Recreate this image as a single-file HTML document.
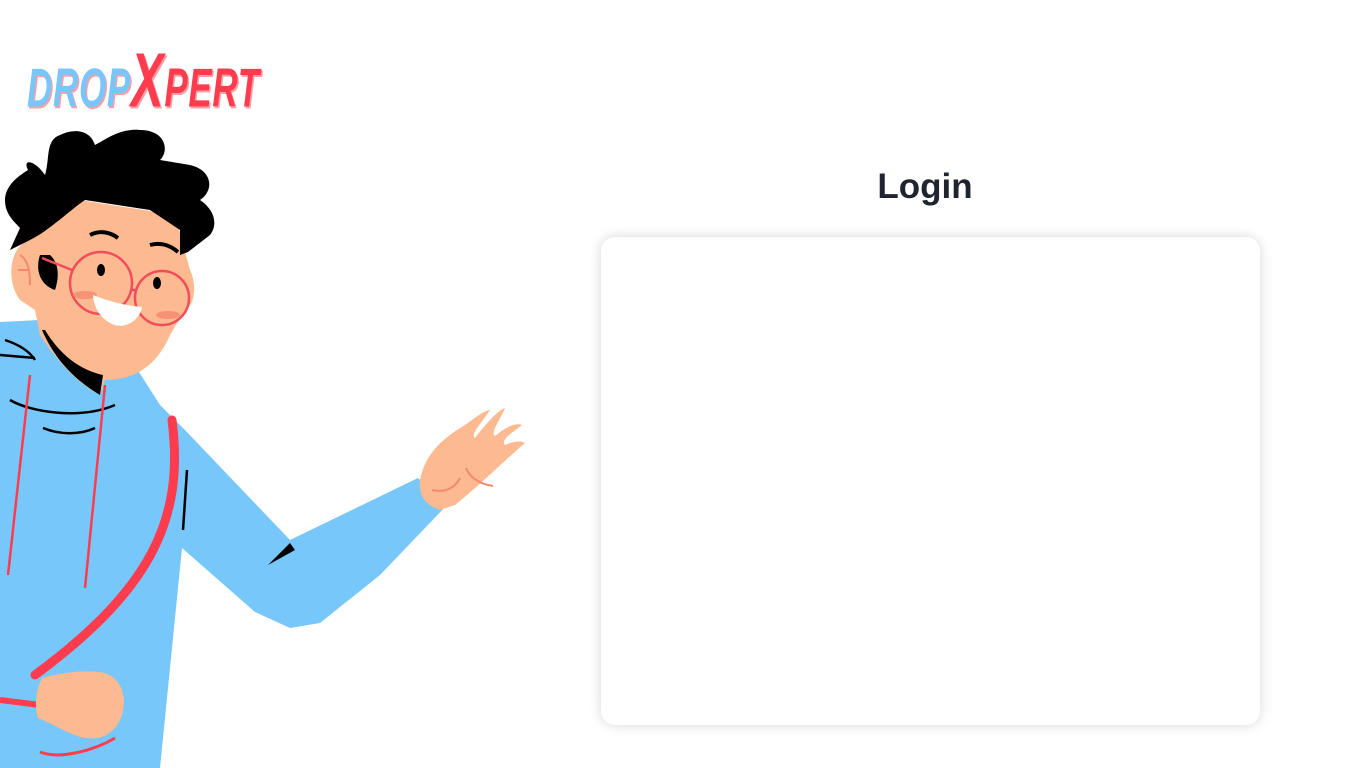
<!DOCTYPE html>
<html><head><meta charset="utf-8"><style>
html,body{margin:0;padding:0;background:#fff;width:1366px;height:768px;overflow:hidden;position:relative;font-family:"Liberation Sans",sans-serif}
.logo{position:absolute;left:27px;top:40px;white-space:nowrap;font-weight:bold;font-style:italic;letter-spacing:1px}
.logo span{display:inline-block;transform:scale(.7,1.1);transform-origin:left}
h1{position:absolute;left:0;width:1850px;top:167px;margin:0;text-align:center;font-size:35px;font-weight:bold;color:#1f2430}
.card{position:absolute;left:601px;top:237px;width:659px;height:488px;border-radius:14px;background:#fff;box-shadow:0 0 12px rgba(0,0,0,.16)}
svg{position:absolute;left:0;top:0}
</style></head><body>
<svg width="540" height="768" viewBox="0 0 540 768">
<path d="M0 322 L40 320 L48 345 L125 350 L160 405 L185 430 L290 540 L418 478 L447 505 L380 575 L320 623 L290 628 L255 612 L182 548 L160 768 L0 768 Z" fill="#78c7fb"/>
<path d="M420 480 C425 455 440 440 465 425 C475 418 485 410 490 410 C480 425 470 435 475 438 C485 425 498 410 505 408 C500 420 490 433 495 436 C505 428 515 422 522 425 C512 433 500 440 505 445 C512 442 520 440 525 443 C505 460 480 485 455 505 L440 510 C425 505 418 495 420 480 Z" fill="#fdb98f"/>
<path d="M432 490 C445 493 455 488 460 478 M466 468 C470 478 480 484 493 486" stroke="#f4896f" stroke-width="2" fill="none"/>
<path d="M40 335 C60 365 80 385 100 395 L105 380 C130 380 155 370 170 335 L185 310 C195 305 197 285 190 270 L175 215 L80 200 L30 240 C10 245 5 280 20 300 L35 310 Z" fill="#fdb98f"/>
<path d="M42 330 C55 360 75 380 100 395 L103 375 C80 370 60 355 45 330 Z" fill="#000"/>
<path d="M10 250 L30 240 C50 230 70 210 85 200 L150 210 L180 230 L180 255 L188 252 L210 235 C218 225 215 210 200 200 C215 190 212 170 190 165 L160 160 C170 150 165 130 140 130 C120 128 105 140 95 145 C90 130 75 128 60 135 C45 140 50 160 45 175 C35 160 22 158 28 170 C20 175 5 185 5 200 C5 215 15 222 20 228 L10 250 Z" fill="#000"/>
<path d="M40 255 C35 270 40 285 55 290 C60 275 58 262 50 255 Z" fill="#000"/>
<path d="M20 255 C28 260 30 270 30 285 M18 270 L28 270" stroke="#f4896f" stroke-width="2" fill="none"/>
<circle cx="101" cy="283" r="31" fill="none" stroke="#f04e5c" stroke-width="2.5"/>
<circle cx="162" cy="298" r="27" fill="none" stroke="#f04e5c" stroke-width="2.5"/>
<path d="M42 258 L72 270 M130 290 L135 290" stroke="#f04e5c" stroke-width="2.5" fill="none"/>
<ellipse cx="85" cy="295" rx="12" ry="4" fill="#f4896f" opacity=".8"/>
<ellipse cx="168" cy="315" rx="12" ry="4" fill="#f4896f" opacity=".8"/>
<ellipse cx="101" cy="270" rx="4" ry="6"/><ellipse cx="157" cy="283" rx="4" ry="6"/>
<path d="M90 235 C100 230 110 232 118 238 M150 245 C160 242 170 245 178 252" stroke="#000" stroke-width="4" fill="none"/>
<path d="M93 295 C110 302 128 306 142 307 C140 320 125 330 112 324 C100 318 94 308 93 295 Z" fill="#fff"/>
<path d="M10 400 C30 412 80 420 115 405 M43 428 C60 435 80 435 95 428 M5 340 C20 345 30 352 35 360 M0 355 L35 358 M187 470 L183 530" stroke="#000" stroke-width="2.5" fill="none"/>
<path d="M268 565 L295 550 L290 543 Z" fill="#000"/>
<path d="M30 375 L8 575 M105 385 L85 588" stroke="#ff3b4e" stroke-width="2.5" fill="none"/>
<path d="M172 420 C185 520 150 590 35 675" stroke="#ff3b4e" stroke-width="9" fill="none" stroke-linecap="round"/>
<path d="M0 700 L40 705" stroke="#ff3b4e" stroke-width="6"/>
<path d="M40 752 C60 760 95 750 115 738" stroke="#ff3b4e" stroke-width="3" fill="none"/>
<path d="M42 678 C60 673 80 670 100 672 C120 675 128 695 122 715 C115 735 100 740 85 738 C70 735 55 725 38 718 C34 705 36 690 42 678 Z" fill="#fdb98f"/>
</svg>
<div class="logo"><span><b style="font-size:50px;color:#78c6fb;text-shadow:2px 2px 0 #f7a0a6">DROP</b><b style="font-size:70px;color:#ff3b4e;text-shadow:2px 2px 0 #f7a0a6">X</b><b style="font-size:50px;color:#ff3b4e;text-shadow:2px 2px 0 #f7a0a6">PERT</b></span></div>
<h1>Login</h1>
<div class="card"></div>
</body></html>
